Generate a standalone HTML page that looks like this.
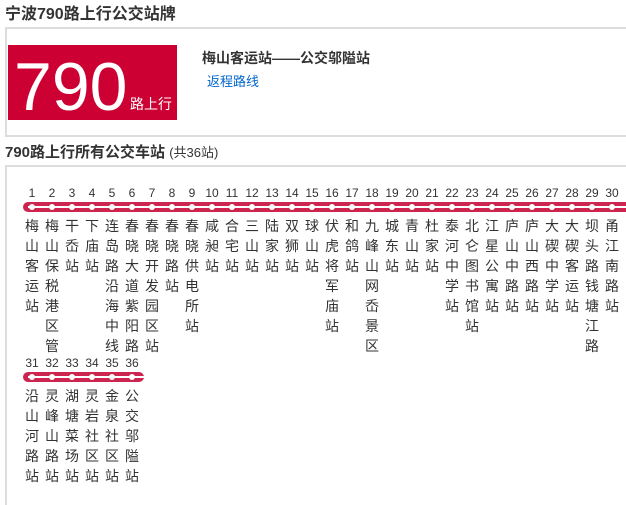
<!DOCTYPE html>
<html><head><meta charset="utf-8"><style>
*{margin:0;padding:0;box-sizing:border-box}
body{width:626px;height:487px;overflow:hidden;background:#fff;font-family:"Liberation Sans","Noto Sans CJK SC",sans-serif;color:#333;position:relative}
h1{position:absolute;left:5px;top:4px;font-size:16px;font-weight:bold;color:#333;line-height:22px}
.box1{position:absolute;left:5px;top:27px;width:640px;height:110px;border:2px solid #ddd;border-right:none}
.red{position:absolute;left:8px;top:45px;width:169px;height:75px;background:#cc0033;color:#fff}
.red .n{position:absolute;left:6px;top:8px;font-size:68px;line-height:68px;font-family:"Liberation Sans",sans-serif;font-weight:normal}
.red .s{position:absolute;left:122px;top:51px;font-size:14px;line-height:16px}
.t1{position:absolute;left:202px;top:48px;font-size:14px;font-weight:bold;color:#333}
.t2{position:absolute;left:207px;top:71px;font-size:13px;color:#0066cc}
h2{position:absolute;left:5px;top:144px;font-size:15px;font-weight:bold;line-height:18px}
h2 span{font-weight:normal;font-size:13px}
.box2{position:absolute;left:5px;top:165px;width:640px;height:340px;border:2px solid #ddd;border-right:none;border-bottom:none}
.row{position:absolute;left:22px;display:flex}
.c{width:20px;text-align:center;font-size:14px;line-height:20px;color:#333}
.c b{display:block;font-weight:normal;font-size:12px;line-height:14px;height:30px}
.bar{position:absolute;height:10px;background:#cc2650;border-radius:5px 0 0 5px}
.bar:after{content:"";position:absolute;left:5px;right:0;top:4px;height:2px;background:#fff}
.dots{position:absolute;display:flex;left:22px}
.dots i{display:block;width:20px;height:10px;position:relative}
.dots i:after{content:"";position:absolute;left:7px;top:2px;width:6px;height:6px;border-radius:50%;background:#fff}
</style></head><body>
<h1>宁波790路上行公交站牌</h1>
<div class="box1"></div>
<div class="red"><div class="n">790</div><div class="s">路上行</div></div>
<div class="t1">梅山客运站——公交邬隘站</div>
<div class="t2">返程路线</div>
<h2>790路上行所有公交车站 <span>(共36站)</span></h2>
<div class="box2"></div>

<div class="bar" style="left:23px;top:202px;width:603px;border-radius:5px 0 0 5px"></div>
<div class="dots" style="top:202px"><i></i><i></i><i></i><i></i><i></i><i></i><i></i><i></i><i></i><i></i><i></i><i></i><i></i><i></i><i></i><i></i><i></i><i></i><i></i><i></i><i></i><i></i><i></i><i></i><i></i><i></i><i></i><i></i><i></i><i></i></div>
<div class="row" style="top:186px">
<div class="c"><b>1</b>梅<br>山<br>客<br>运<br>站</div>
<div class="c"><b>2</b>梅<br>山<br>保<br>税<br>港<br>区<br>管</div>
<div class="c"><b>3</b>干<br>岙<br>站</div>
<div class="c"><b>4</b>下<br>庙<br>站</div>
<div class="c"><b>5</b>连<br>岛<br>路<br>沿<br>海<br>中<br>线</div>
<div class="c"><b>6</b>春<br>晓<br>大<br>道<br>紫<br>阳<br>路</div>
<div class="c"><b>7</b>春<br>晓<br>开<br>发<br>园<br>区<br>站</div>
<div class="c"><b>8</b>春<br>晓<br>路<br>站</div>
<div class="c"><b>9</b>春<br>晓<br>供<br>电<br>所<br>站</div>
<div class="c"><b>10</b>咸<br>昶<br>站</div>
<div class="c"><b>11</b>合<br>宅<br>站</div>
<div class="c"><b>12</b>三<br>山<br>站</div>
<div class="c"><b>13</b>陆<br>家<br>站</div>
<div class="c"><b>14</b>双<br>狮<br>站</div>
<div class="c"><b>15</b>球<br>山<br>站</div>
<div class="c"><b>16</b>伏<br>虎<br>将<br>军<br>庙<br>站</div>
<div class="c"><b>17</b>和<br>鸽<br>站</div>
<div class="c"><b>18</b>九<br>峰<br>山<br>网<br>岙<br>景<br>区</div>
<div class="c"><b>19</b>城<br>东<br>站</div>
<div class="c"><b>20</b>青<br>山<br>站</div>
<div class="c"><b>21</b>杜<br>家<br>站</div>
<div class="c"><b>22</b>泰<br>河<br>中<br>学<br>站</div>
<div class="c"><b>23</b>北<br>仑<br>图<br>书<br>馆<br>站</div>
<div class="c"><b>24</b>江<br>星<br>公<br>寓<br>站</div>
<div class="c"><b>25</b>庐<br>山<br>中<br>路<br>站</div>
<div class="c"><b>26</b>庐<br>山<br>西<br>路<br>站</div>
<div class="c"><b>27</b>大<br>碶<br>中<br>学<br>站</div>
<div class="c"><b>28</b>大<br>碶<br>客<br>运<br>站</div>
<div class="c"><b>29</b>坝<br>头<br>路<br>钱<br>塘<br>江<br>路</div>
<div class="c"><b>30</b>甬<br>江<br>南<br>路<br>站</div>
</div>

<div class="bar" style="left:23px;top:372px;width:121px;border-radius:5px"></div>
<div class="dots" style="top:372px"><i></i><i></i><i></i><i></i><i></i><i></i></div>
<div class="row" style="top:356px">
<div class="c"><b>31</b>沿<br>山<br>河<br>路<br>站</div>
<div class="c"><b>32</b>灵<br>峰<br>山<br>路<br>站</div>
<div class="c"><b>33</b>湖<br>塘<br>菜<br>场<br>站</div>
<div class="c"><b>34</b>灵<br>岩<br>社<br>区<br>站</div>
<div class="c"><b>35</b>金<br>泉<br>社<br>区<br>站</div>
<div class="c"><b>36</b>公<br>交<br>邬<br>隘<br>站</div>
</div>
</body></html>
